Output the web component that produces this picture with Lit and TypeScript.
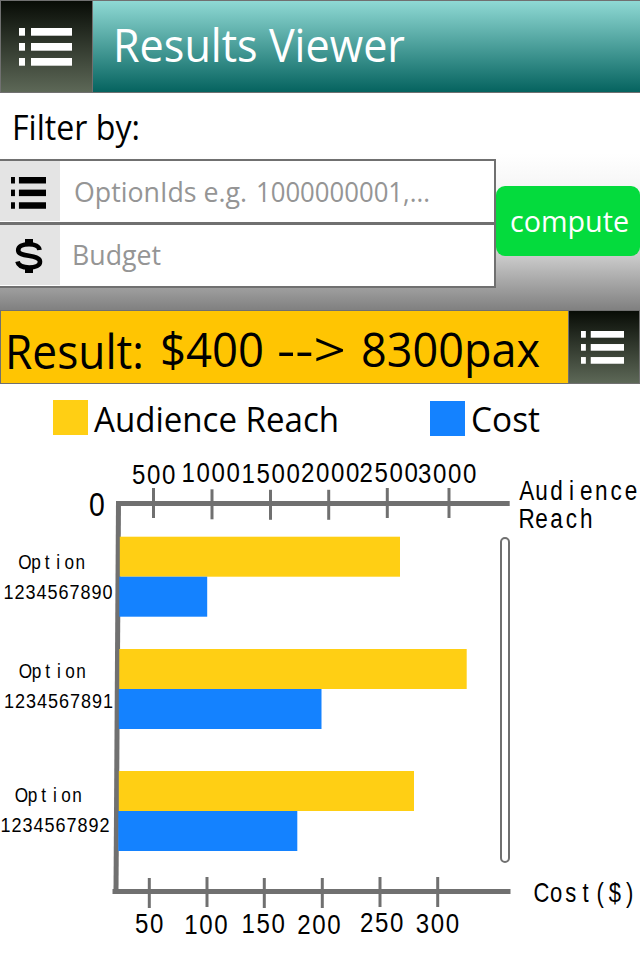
import { LitElement, html, svg, css } from "lit";
import { customElement, property } from "lit/decorators.js";

@customElement("list-icon")
class ListIcon extends LitElement {
  static styles = css`
    :host { display: block; flex: none; }
    svg { display: block; width: 100%; height: 100%; fill: currentColor; }
  `;
  render() {
    return html`<svg viewBox="0 0 53 38" preserveAspectRatio="none">
      ${[0, 15, 30].map(y => svg`<rect x="0" y=${y} width="6" height="7.700"/><rect x="12" y=${y} width="41" height="7.700"/>`)}
    </svg>`;
  }
}

interface Label { t: string; x: number; y: number; pitch: number; size: number; sx?: number; }

@customElement("results-chart")
class ResultsChart extends LitElement {
  static styles = css`
    :host { display: block; }
    svg { display: block; }
    text { font-family: "Liberation Sans", sans-serif; text-anchor: middle; fill: #000; }
    .reach { fill: #ffcf14; }
    .cost { fill: #1482ff; }
    .axis { stroke: #707070; stroke-width: 5; }
    .tick { stroke: #707070; stroke-width: 3; }
    .scroll { fill: #fff; stroke: #707070; stroke-width: 2; }
  `;
  bars = [
    { y: 536.7, reach: 400, cost: 207.2, x: 119.8 },
    { y: 649, reach: 466.7, cost: 321.5, x: 119.3 },
    { y: 771, reach: 414, cost: 297.3, x: 118.8 },
  ];
  topTicks: [number, number][] = [[153.5, 488], [212, 489.3], [270.5, 489.8], [328.7, 489.8], [387.3, 488], [449, 488]];
  bottomTicks: [number, number][] = [[149.3, 878], [207, 877], [264.3, 878], [322.3, 878], [380, 877], [437.7, 877]];
  labels: Label[] = [
    { t: "500", x: 131.3, y: 484, pitch: 15, size: 28 },
    { t: "1000", x: 180.8, y: 482.3, pitch: 15, size: 28 },
    { t: "1500", x: 240.8, y: 483, pitch: 15, size: 28 },
    { t: "2000", x: 300.3, y: 482.3, pitch: 15, size: 28 },
    { t: "2500", x: 358.8, y: 482.3, pitch: 15, size: 28 },
    { t: "3000", x: 417.3, y: 483, pitch: 15, size: 28 },
    { t: "0", x: 88.3, y: 516, pitch: 17, size: 33 },
    { t: "Audience", x: 519.3, y: 500.3, pitch: 14.9, size: 27.5, sx: .82 },
    { t: "Reach", x: 519.3, y: 528.3, pitch: 14.9, size: 27.5, sx: .82 },
    { t: "Option", x: 19.3, y: 568.5, pitch: 11.1, size: 20 },
    { t: "1234567890", x: 3, y: 598.5, pitch: 11, size: 21 },
    { t: "Option", x: 20, y: 677.5, pitch: 11.1, size: 20 },
    { t: "1234567891", x: 3.5, y: 707.5, pitch: 11, size: 21 },
    { t: "Option", x: 16, y: 801.5, pitch: 11.1, size: 20 },
    { t: "1234567892", x: 0, y: 831.5, pitch: 11, size: 21 },
    { t: "50", x: 134.3, y: 933.3, pitch: 15, size: 28 },
    { t: "100", x: 183.5, y: 934, pitch: 15, size: 28 },
    { t: "150", x: 240.8, y: 933.3, pitch: 15, size: 28 },
    { t: "200", x: 296.5, y: 934, pitch: 15, size: 28 },
    { t: "250", x: 359.3, y: 932.3, pitch: 15, size: 28 },
    { t: "300", x: 415, y: 933.3, pitch: 15, size: 28 },
    { t: "Cost($)", x: 534, y: 902.3, pitch: 14.7, size: 27.5, sx: .8 },
  ];
  render() {
    return html`<svg width="640" height="510" viewBox="0 450 640 510">
      <line class="axis" x1="118.500" y1="501" x2="116" y2="891"/>
      ${this.bars.map(b => svg`
        <rect class="reach" x=${b.x} y=${b.y} width=${b.reach - b.x} height="40"/>
        <rect class="cost" x=${b.x - .5} y=${b.y + 40} width=${b.cost - b.x + .5} height="40"/>`)}
      <line class="axis" x1="116.500" y1="503.500" x2="509.700" y2="503.500"/>
      <line class="axis" x1="112.500" y1="891.500" x2="510.500" y2="891.500"/>
      ${[...this.topTicks, ...this.bottomTicks].map(([x, y]) => svg`<line class="tick" x1=${x} x2=${x} y1=${y} y2=${y + 30}/>`)}
      <rect class="scroll" x="501" y="538" width="8" height="324" rx="4"/>
      ${this.labels.map(l => {
        const sx = l.sx ?? .86;
        const xs = [...l.t].map((_, i) => ((i + .5) * l.pitch / sx).toFixed(2)).join(" ");
        return svg`<text transform="translate(${l.x} ${l.y}) scale(${sx} 1)" x=${xs} y="0" font-size=${l.size}>${l.t}</text>`;
      })}
    </svg>`;
  }
}

@customElement("fit-text")
class FitText extends LitElement {
  @property() text = "";
  @property({ type: Number }) width = 100;
  @property({ type: Number }) size = 30;
  static styles = css`
    :host { display: block; flex: none; }
    svg { display: block; overflow: visible; }
    text { font-family: "Open Sans", "Noto Sans", sans-serif; fill: currentColor; white-space: pre; }
  `;
  render() {
    return html`<svg width=${this.width} height=${this.size}>
      <text x="0" y=${this.size * .85} font-size=${this.size} textLength=${this.width} lengthAdjust="spacingAndGlyphs">${this.text}</text>
    </svg>`;
  }
}

@customElement("app-root")
class AppRoot extends LitElement {
  static styles = css`
    * { box-sizing: border-box; }
    :host { display: block; width: 640px; height: 960px; overflow: hidden; background: #fff; color: #000; }
    header { display: flex; height: 93px; border: 1px solid #707070; border-right: 0; background: linear-gradient(#8fd9d4, #05635f); color: #fff; }
    .menu { display: flex; width: 92px; border-right: 1px solid #707070; background: linear-gradient(#080c06, #5d6857); color: #fff; }
    .menu list-icon { width: 53px; height: 38px; margin: 27px 0 0 18px; }
    .title { margin: 22px 0 0 20px; }
    .filters { height: 217px; padding-top: 18px; background: linear-gradient(#fff 0, #fff 28%, #f7f7f7 42%, #cbcbcb 75%, #808080 100%); }
    .caption { margin-left: 12px; height: 48px; }
    .row { display: flex; }
    .fields { width: 496px; height: 129px; background: #fff; border: 2px solid #707070; border-left: 0; }
    .field { display: flex; height: 61px; color: #959595; }
    .field + .field { border-top: 3px solid #707070; height: 64px; }
    .badge { width: 60px; height: 60px; background: #e4e4e4; color: #000; display: flex; }
    .badge list-icon { width: 35px; height: 32px; margin: 16px 0 0 11px; }
    .dollar { margin: 14px 0 0 15px; }
    .ids { margin: 17px 0 0 14px; }
    .numbers { margin: 17px 0 0 9px; }
    .budget { margin: 16px 0 0 12px; }
    .compute { display: flex; justify-content: center; align-items: flex-start; width: 144px; height: 70px; margin-top: 27px; border: 0; border-radius: 9px; background: #04db3d; color: #fff; padding: 20px 0 0 2px; }
    .result { display: flex; height: 74px; border: 1px solid #707070; background: #ffc502; }
    .label { margin: 17.5px 0 0 4px; }
    .amount { margin: 15.500px 0 0 16px; }
    .arrow { margin: 15.500px 0 0 13px; }
    .pax { margin: 15.500px 0 0 15px; }
    .result .menu { width: 71px; margin-left: auto; border-right: 0; border-left: 1px solid #707070; }
    .result .menu list-icon { width: 43px; height: 33px; margin: 20px 0 0 12px; }
    .legend { display: flex; height: 66px; }
    .swatch { width: 35px; height: 35px; margin: 16px 6px 0 53px; background: #ffcf14; }
    .swatch.blue { background: #1482ff; margin: 17px 6px 0 90.500px; }
    .legend fit-text { margin-top: 18.500px; }
  `;
  render() {
    return html`
      <header>
        <div class="menu"><list-icon></list-icon></div>
        <fit-text class="title" text="Results Viewer" width="292" size="46"></fit-text>
      </header>
      <section class="filters">
        <fit-text class="caption" text="Filter by:" width="128" size="34"></fit-text>
        <div class="row">
          <div class="fields">
            <div class="field">
              <div class="badge"><list-icon></list-icon></div>
              <fit-text class="ids" text="OptionIds e.g." width="173" size="28"></fit-text>
              <fit-text class="numbers" text="1000000001,..." width="174" size="28"></fit-text>
            </div>
            <div class="field">
              <div class="badge"><svg class="dollar" width="28" height="34" viewBox="0 0 28 34" fill="none" stroke="#000">
                <path stroke-width="4.600" d="M24.500 11C24 7.600 20 5.300 14 5.300C7.500 5.300 3.200 7.500 3.200 11.200C3.200 19 25 14.500 25 22.800C25 26.500 20.500 28.500 14.200 28.500C7.500 28.500 3.200 26.500 2.500 22.500"/>
                <path stroke-width="8" d="M14 0V5M14 29V34"/></svg></div>
              <fit-text class="budget" text="Budget" width="89" size="28"></fit-text>
            </div>
          </div>
          <button class="compute"><fit-text text="compute" width="119" size="30"></fit-text></button>
        </div>
      </section>
      <section class="result">
        <fit-text class="label" text="Result:" width="139" size="47"></fit-text>
        <fit-text class="amount" text="$400" width="104" size="47"></fit-text>
        <fit-text class="arrow" text="--&gt;" width="69" size="47"></fit-text>
        <fit-text class="pax" text="8300pax" width="179" size="47"></fit-text>
        <div class="menu"><list-icon></list-icon></div>
      </section>
      <div class="legend">
        <div class="swatch"></div>
        <fit-text text="Audience Reach" width="245" size="34"></fit-text>
        <div class="swatch blue"></div>
        <fit-text text="Cost" width="69" size="34"></fit-text>
      </div>
      <results-chart></results-chart>`;
  }
}
